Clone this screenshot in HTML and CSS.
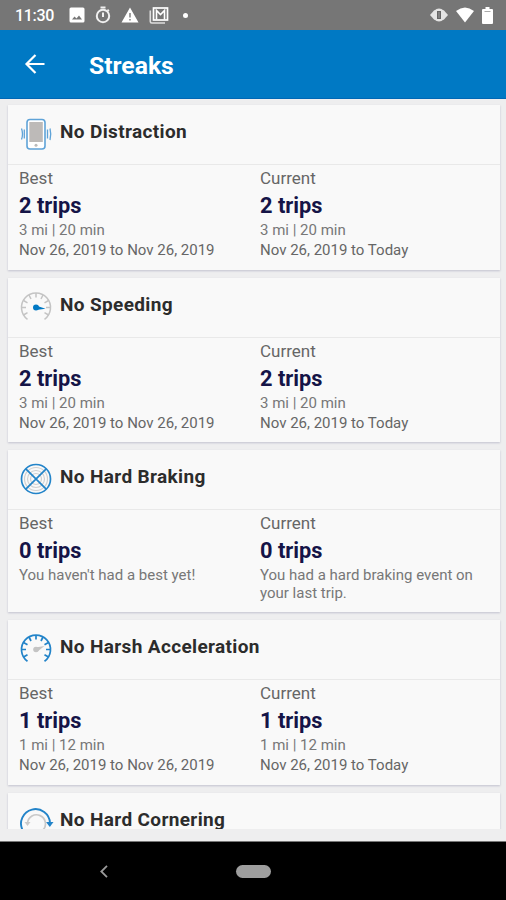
FILE: index.html
```
<!DOCTYPE html>
<html lang="en">
<head>
    <meta charset="UTF-8">
    <meta name="viewport" content="width=device-width, initial-scale=1.0">
    <title>Streaks</title>
    <link rel="stylesheet" href="styles.css">
</head>
<body>
    <div class="status-bar">
        <span class="time">11:30</span>
        <div class="notifications">
            <svg width="16" height="16" viewBox="0 0 16 16"><path fill="#fff" fill-rule="evenodd" d="M2 .5h12a1.500 1.500 0 0 1 1.500 1.500v12a1.500 1.500 0 0 1-1.500 1.500H2A1.500 1.500 0 0 1 .5 14V2A1.500 1.500 0 0 1 2 .5zM3 12.500h10L10 8.500l-2.500 3-2-2z"/></svg>
            <svg width="16" height="18" viewBox="0 0 16 18"><g fill="none" stroke="#f0f0f0" stroke-width="2"><circle cx="8" cy="10" r="6.200"/><path d="M5.500 1.500h5M8 6.500v4.500M12.500 5l1.300-1.300"/></g></svg>
            <svg width="18" height="16" viewBox="0 0 18 16"><path fill="#fff" fill-rule="evenodd" d="M9 .5L17.500 15.500H.5zM8.300 6v4.500h1.400V6zM8.300 12v1.500h1.400V12z"/></svg>
            <svg width="20" height="17" viewBox="0 0 20 17"><path fill="none" stroke="#ddd" stroke-width="1.600" d="M1.300 3.500v11a1.500 1.500 0 0 0 1.500 1.500H16"/><rect x="4.500" y="1" width="14" height="12" fill="none" stroke="#fff" stroke-width="1.700"/><path fill="none" stroke="#fff" stroke-width="1.600" d="M7.500 12.500v-9l4 4 4-4v9"/></svg>
            <span class="dot"></span>
        </div>
        <div class="system">
            <svg width="18" height="14" viewBox="0 0 18 14"><path fill="#e4e4e4" d="M0 7l4-4.500h10L18 7l-4 4.500H4z"/><circle cx="9" cy="7" r="6.500" fill="#e4e4e4"/><rect x="7" y="3" width="4" height="8" fill="#666"/><path stroke="#999" d="M9 4v6"/></svg>
            <svg width="18" height="16" viewBox="0 0 18 16"><path fill="#fff" d="M0 4Q9-3 18 4L9 15.500z"/></svg>
            <svg width="11" height="17" viewBox="0 0 11 17"><path fill="#fff" d="M3.500 0h4v2H10a1 1 0 0 1 1 1v13a1 1 0 0 1-1 1H1a1 1 0 0 1-1-1V3a1 1 0 0 1 1-1h2.500z"/><path stroke="#aaa" d="M2.500 4.500h6"/></svg>
        </div>
    </div>

    <header class="app-bar">
        <svg class="back" width="20" height="20" viewBox="0 0 20 20"><path fill="none" stroke="#fff" stroke-width="2.200" d="M19.500 10H1.800M10.500 1L1.500 10l9 9"/></svg>
        <h1>Streaks</h1>
    </header>

    <main class="streaks">
        <section class="card">
            <div class="card-header">
                <svg class="icon" viewBox="0 0 32 32">
                    <rect x="7" y="1.500" width="18" height="29.500" rx="3" fill="#fff" stroke="#5fa3d8" stroke-width="1.600"/>
                    <rect x="9.300" y="4" width="13.500" height="20" fill="#bdbab8"/>
                    <circle cx="16" cy="27.300" r="1.500" fill="#bbb"/>
                    <path fill="none" stroke="#5fa3d8" stroke-width="1.300" d="M1.500 10.500q2 5.500 0 11M4.300 11.500v9M30 10.500q1.500 5.500 0 11.500M27.500 11.500v9"/>
                </svg>
                <h2>No Distraction</h2>
            </div>
            <div class="card-body">
                <div class="column">
                    <p class="label">Best</p>
                    <p class="trips">2 trips</p>
                    <p class="distance">3 mi | 20 min</p>
                    <p class="dates">Nov 26, 2019 to Nov 26, 2019</p>
                </div>
                <div class="column">
                    <p class="label">Current</p>
                    <p class="trips">2 trips</p>
                    <p class="distance">3 mi | 20 min</p>
                    <p class="dates">Nov 26, 2019 to Today</p>
                </div>
            </div>
        </section>

        <section class="card">
            <div class="card-header">
                <svg class="icon" viewBox="0 0 32 32">
                    <g fill="none" stroke="#c4c4c4" stroke-width="1.500">
                        <path d="M7.500 28.300a14.500 14.500 0 1 1 17 0"/>
                        <path d="M16 2v4.500M9 4l2 4M23 4l-2 4M3.500 9.500l4 2.300M28.500 9.500l-4 2.300M1.500 16.500H6M30.500 16.500H26M3.500 24l4-2.300M28.500 24l-4-2.300"/>
                    </g>
                    <circle cx="16" cy="16.500" r="3" fill="#0079c4"/>
                    <path fill="#0079c4" d="M16 14.500l9.500 3.200-9.500 1.300z"/>
                </svg>
                <h2>No Speeding</h2>
            </div>
            <div class="card-body">
                <div class="column">
                    <p class="label">Best</p>
                    <p class="trips">2 trips</p>
                    <p class="distance">3 mi | 20 min</p>
                    <p class="dates">Nov 26, 2019 to Nov 26, 2019</p>
                </div>
                <div class="column">
                    <p class="label">Current</p>
                    <p class="trips">2 trips</p>
                    <p class="distance">3 mi | 20 min</p>
                    <p class="dates">Nov 26, 2019 to Today</p>
                </div>
            </div>
        </section>

        <section class="card">
            <div class="card-header">
                <svg class="icon" viewBox="0 0 32 32">
                    <g fill="none" stroke="#d0d0d0" stroke-width="1.200">
                        <circle cx="16" cy="16" r="11.500"/>
                        <circle cx="16" cy="16" r="8.500"/>
                        <circle cx="16" cy="16" r="5.500"/>
                    </g>
                    <g fill="none" stroke="#2384c9" stroke-width="1.700">
                        <circle cx="16" cy="16" r="14.500"/>
                        <path d="M5.800 5.800l20.400 20.400M26.200 5.800L5.800 26.200"/>
                    </g>
                </svg>
                <h2>No Hard Braking</h2>
            </div>
            <div class="card-body">
                <div class="column">
                    <p class="label">Best</p>
                    <p class="trips">0 trips</p>
                    <p class="message">You haven't had a best yet!</p>
                </div>
                <div class="column">
                    <p class="label">Current</p>
                    <p class="trips">0 trips</p>
                    <p class="message">You had a hard braking event on your last trip.</p>
                </div>
            </div>
        </section>

        <section class="card">
            <div class="card-header">
                <svg class="icon" viewBox="0 0 32 32">
                    <g fill="none" stroke="#2384c9" stroke-width="1.700">
                        <path d="M7.500 28.300a14.500 14.500 0 1 1 17 0"/>
                        <path d="M16 2v4.500M9 4l2 4M23 4l-2 4M3.500 9.500l4 2.300M28.500 9.500l-4 2.300M1.500 16.500H6M30.500 16.500H26M3.500 24l4-2.300M28.500 24l-4-2.300"/>
                    </g>
                    <circle cx="16" cy="16.500" r="2.800" fill="#c4c4c4"/>
                    <path fill="#c4c4c4" d="M15.500 14.500l9-1.500-7 5.500z"/>
                </svg>
                <h2>No Harsh Acceleration</h2>
            </div>
            <div class="card-body">
                <div class="column">
                    <p class="label">Best</p>
                    <p class="trips">1 trips</p>
                    <p class="distance">1 mi | 12 min</p>
                    <p class="dates">Nov 26, 2019 to Nov 26, 2019</p>
                </div>
                <div class="column">
                    <p class="label">Current</p>
                    <p class="trips">1 trips</p>
                    <p class="distance">1 mi | 12 min</p>
                    <p class="dates">Nov 26, 2019 to Today</p>
                </div>
            </div>
        </section>

        <section class="card">
            <div class="card-header">
                <svg class="icon" viewBox="0 0 32 32">
                    <path fill="none" stroke="#2384c9" stroke-width="1.900" d="M2.500 24A14.500 14.500 0 1 1 30 17"/>
                    <path fill="#2384c9" d="M26 16h7.500l-3.700 5z"/>
                    <path fill="none" stroke="#c9c9c9" stroke-width="1.700" d="M7.500 17a9 9 0 1 1 15.500 7"/>
                    <path fill="#c9c9c9" d="M4.500 16h6l-3 4z"/>
                </svg>
                <h2>No Hard Cornering</h2>
            </div>
        </section>
    </main>

    <nav class="nav-bar">
        <svg class="nav-back" width="8" height="13" viewBox="0 0 8 13"><path fill="none" stroke="#9a9a9a" stroke-width="1.800" d="M7 .8L1.300 6.500 7 12.200"/></svg>
        <span class="home-pill"></span>
    </nav>
</body>
</html>
```
FILE: styles.css
```
* {
    box-sizing: border-box;
}

body {
    margin: 0;
    height: 900px;
    display: flex;
    flex-direction: column;
    overflow: hidden;
    font-family: Roboto, sans-serif;
    background-color: #eeeeef;
}

h1, h2, p {
    margin: 0;
}

svg {
    display: block;
    flex-shrink: 0;
    overflow: visible;
}

/* Android status bar */
.status-bar {
    height: 30px;
    flex-shrink: 0;
    display: flex;
    align-items: center;
    padding: 0 13px 0 15px;
    background-color: #767676;
    color: #fff;
}

.time {
    width: 54px;
    font-size: 16px;
    font-weight: 500;
    letter-spacing: -0.3px;
}

.notifications {
    display: flex;
    align-items: center;
    gap: 10px;
}

.dot {
    width: 5px;
    height: 5px;
    margin-left: 4px;
    border-radius: 50%;
    background-color: #fff;
}

.system {
    display: flex;
    align-items: center;
    gap: 8px;
    margin-left: auto;
}

.app-bar {
    height: 69px;
    flex-shrink: 0;
    display: flex;
    align-items: center;
    padding: 0 25px;
    background-color: #0079c4;
    border-bottom: 1px solid #0067b5;
    color: #fff;
}

.app-bar h1 {
    margin: 3px 0 0 44px;
    font-size: 24.7px;
    font-weight: 700;
}

/* Scrolling list of cards */
.streaks {
    height: 730px;
    flex-shrink: 0;
    display: flex;
    flex-direction: column;
    gap: 8px;
    padding: 6px 6px 0 8px;
    overflow: hidden;
}

.card {
    flex-shrink: 0;
    padding-bottom: 9.5px;
    background-color: #f9f9f9;
    box-shadow: 0 1px 2px rgba(60, 60, 110, 0.25);
}

.card-header {
    height: 60px;
    display: flex;
    align-items: flex-start;
    padding: 13px 0 0 12px;
    border-bottom: 1px solid #e9e9e9;
}

.icon {
    width: 32px;
    height: 32px;
}

.card-header h2 {
    margin: 2px 0 0 8px;
    font-size: 19px;
    font-weight: 700;
    line-height: 24px;
    letter-spacing: 0.36px;
    color: #2c2c2c;
}

.card-body {
    display: grid;
    grid-template-columns: 241px 1fr;
    padding-left: 11px;
}

.label {
    font-size: 17px;
    line-height: 26px;
    color: #666;
}

.trips {
    padding-top: 1px;
    font-size: 21.8px;
    font-weight: 700;
    line-height: 28px;
    color: #151447;
}

.distance {
    font-size: 15px;
    line-height: 20px;
    color: #777;
}

.dates {
    font-size: 15px;
    line-height: 20px;
    color: #666;
}

.message {
    padding: 1px 10px 0.5px 0;
    font-size: 15px;
    line-height: 18px;
    color: #777;
}

/* Android navigation bar */
.nav-bar {
    height: 59px;
    flex-shrink: 0;
    display: flex;
    align-items: center;
    margin-top: auto;
    padding-left: 100px;
    background-color: #000;
    border-top: 1px solid #777;
}

.home-pill {
    width: 35px;
    height: 13px;
    margin-left: 128px;
    border-radius: 7px;
    background-color: #9e9e9e;
}
```
